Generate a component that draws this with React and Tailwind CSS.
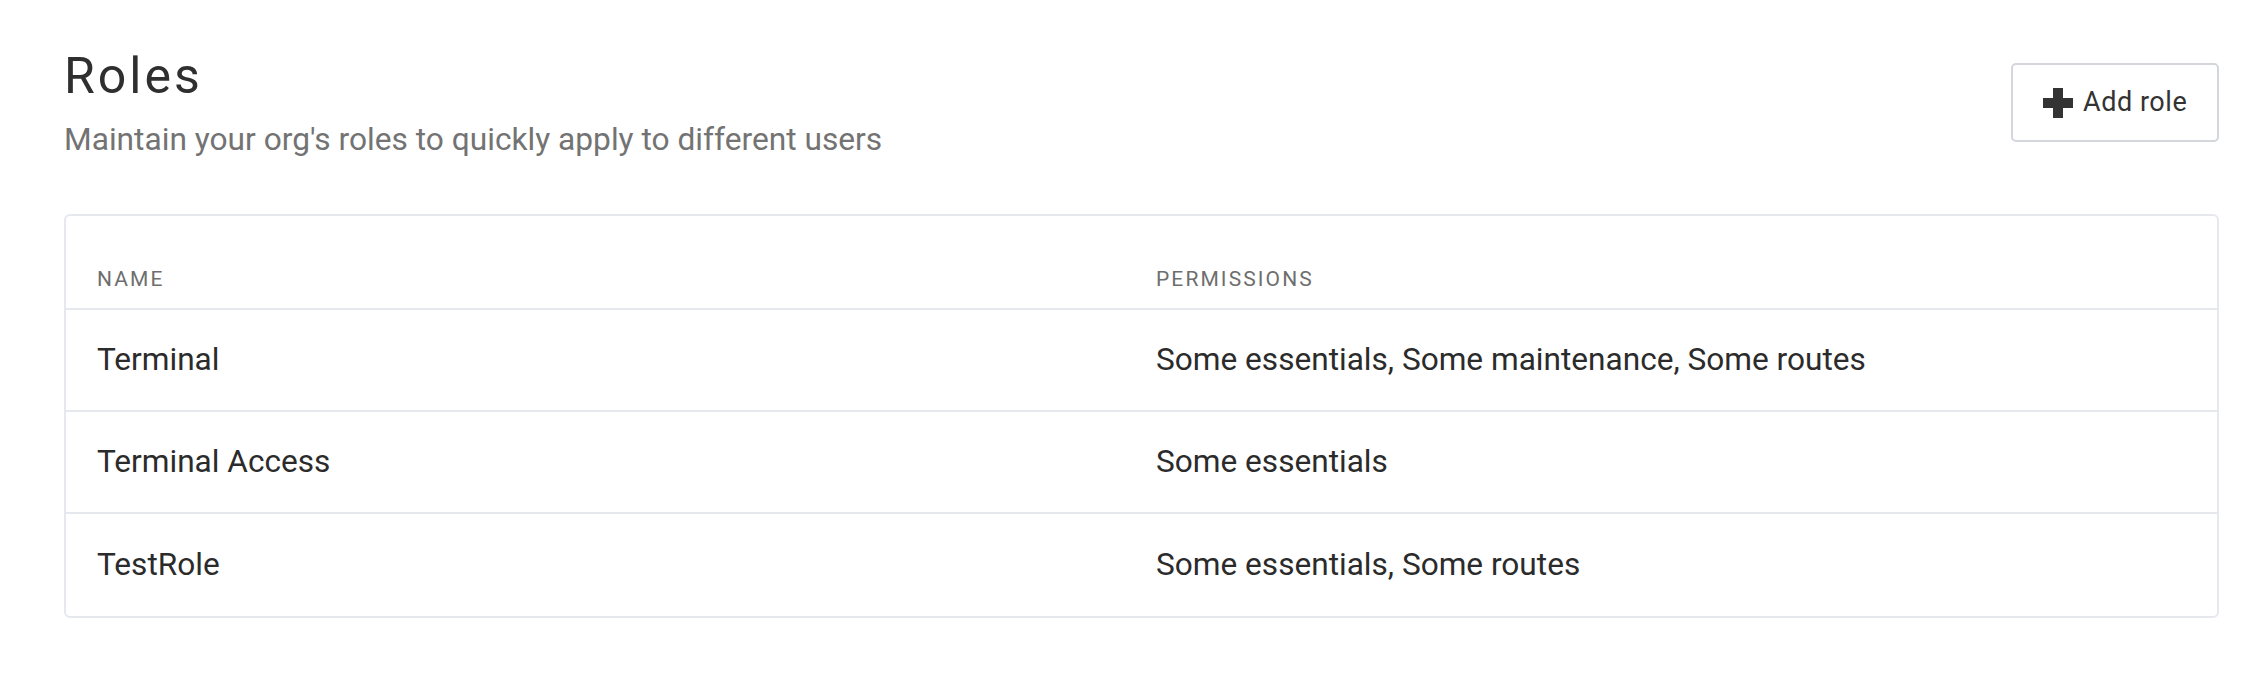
const roles = [
  { name: "Terminal", permissions: "Some essentials, Some maintenance, Some routes" },
  { name: "Terminal Access", permissions: "Some essentials" },
  { name: "TestRole", permissions: "Some essentials, Some routes" },
];

function PlusIcon() {
  return (
    <svg width="30" height="30" viewBox="0 0 30 30" className="shrink-0">
      <path d="M10 0h10v10h10v10H20v10H10V20H0V10h10z" fill="#333333" />
    </svg>
  );
}

export default function App() {
  return (
    <div className="min-h-screen bg-white pl-[64px] pr-[33px] pt-[48px] font-['Roboto',sans-serif]">
      <div className="flex items-start justify-between">
        <div>
          <h1 className="text-[50px] leading-[56px] tracking-[0.06em] text-[#2f2f2f]">Roles</h1>
          <p className="mt-[16px] text-[31.7px] leading-[40px] text-[#737373]">
            Maintain your org's roles to quickly apply to different users
          </p>
        </div>
        <button className="mt-[15px] flex h-[79px] w-[208px] items-center gap-[10px] rounded-[5px] border-2 border-[#d3d7dc] bg-white pl-[30px] text-[27px] tracking-[0.02em] text-[#333333]">
          <PlusIcon />
          <span>Add role</span>
        </button>
      </div>

      <div className="mt-[54px] rounded-[6px] border-2 border-[#e5e8ec]">
        <div className="flex h-[94px] items-end border-b-2 border-[#e5e8ec] pb-[17px] pl-[31px] text-[21px] leading-[24px] tracking-[0.1em] text-[#6e6e6e]">
          <div className="w-[1059px]">NAME</div>
          <div className="flex-1">PERMISSIONS</div>
        </div>
        {roles.map((role, i) => (
          <div
            key={role.name}
            className={`flex h-[102px] items-center pl-[31px] text-[31.6px] text-[#2b2b2b] ${
              i < roles.length - 1 ? "border-b-2 border-[#e5e8ec]" : ""
            }`}
          >
            <div className="w-[1059px]">{role.name}</div>
            <div className="flex-1">{role.permissions}</div>
          </div>
        ))}
      </div>
    </div>
  );
}
